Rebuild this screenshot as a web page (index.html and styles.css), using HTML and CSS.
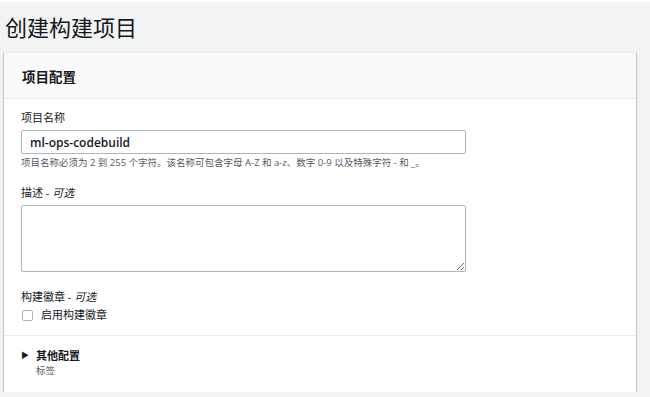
FILE: index.html
```html
<!DOCTYPE html>
<html lang="zh-CN">
<head>
    <meta charset="UTF-8">
    <meta name="viewport" content="width=device-width, initial-scale=1.0">
    <title>创建构建项目</title>
    <link rel="stylesheet" href="styles.css">
</head>
<body>
    <div class="page">
        <h1 class="page-title">创建构建项目</h1>

        <div class="panel">
            <div class="panel-header">
                <h2>项目配置</h2>
            </div>

            <div class="panel-body">
                <div class="field">
                    <label class="field-label">项目名称</label>
                    <input class="text-input" type="text" value="ml-ops-codebuild">
                    <p class="field-hint">项目名称必须为 2 到 255 个字符。该名称可包含字母 A-Z 和 a-z、数字 0-9 以及特殊字符 - 和 _。</p>
                </div>

                <div class="field">
                    <label class="field-label">描述 - <i>可选</i></label>
                    <textarea class="text-area"></textarea>
                </div>

                <div class="field field-last">
                    <label class="field-label">构建徽章 - <i>可选</i></label>
                    <label class="check">
                        <span class="check-box"></span>
                        <span>启用构建徽章</span>
                    </label>
                </div>
            </div>

            <div class="panel-footer">
                <div class="expander">
                    <span class="caret">&#9654;</span>
                    <span class="expander-title">其他配置</span>
                </div>
                <div class="expander-sub">标签</div>
            </div>
        </div>
    </div>
</body>
</html>
```

FILE: styles.css
```css
* {
    margin: 0;
    padding: 0;
    box-sizing: border-box;
}

body {
    font-family: "Open Sans", "Noto Sans CJK SC", sans-serif;
    background-color: #f2f3f3;
    color: #16191f;
    border-top: 2px solid #ffffff;
}

.page {
    padding: 0 14px 0 4px;
}

.page-title {
    font-family: "Noto Sans CJK SC", sans-serif;
    font-size: 22px;
    font-weight: 400;
    line-height: 30px;
    padding: 9px 0 11px 1px;
    color: #16191f;
}

.panel {
    background: #ffffff;
    box-shadow: 0 1px 1px 0 rgba(0, 28, 36, 0.3),
                1px 1px 1px 0 rgba(0, 28, 36, 0.15),
                -1px 1px 1px 0 rgba(0, 28, 36, 0.15);
    border-top: 1px solid #eaeded;
}

.panel-header {
    background: #fafafa;
    border-bottom: 1px solid #eaeded;
    height: 46px;
    display: flex;
    align-items: center;
    padding: 0 18px;
}

.panel-header h2 {
    font-family: "Noto Sans CJK SC", sans-serif;
    font-size: 13.5px;
    font-weight: 700;
    color: #16191f;
}

.panel-body {
    padding: 10px 17px 12px;
}

.field {
    margin-bottom: 14px;
}

.field-last {
    margin-top: 16px;
    margin-bottom: 0;
}

.field-label {
    display: block;
    font-size: 11px;
    line-height: 18px;
    color: #16191f;
    margin-bottom: 3px;
}

.field-label i {
    font-style: italic;
}

.text-input {
    display: block;
    width: 445px;
    height: 24px;
    border: 1px solid #aab7b8;
    border-radius: 2px;
    padding: 0 8px;
    font-family: "Open Sans", "Noto Sans CJK SC", sans-serif;
    font-size: 12px;
    font-weight: 600;
    color: #16191f;
    background: #ffffff;
}

.field-hint {
    font-size: 9.5px;
    line-height: 14px;
    color: #545b64;
    margin-top: 2px;
}

.text-area {
    display: block;
    width: 445px;
    height: 67px;
    border: 1px solid #aab7b8;
    border-radius: 2px;
    background: #ffffff;
    resize: vertical;
}

.check {
    display: flex;
    align-items: center;
    gap: 8px;
    font-size: 11px;
    line-height: 16px;
    margin-top: -2px;
}

.check-box {
    width: 11px;
    height: 11px;
    border: 1px solid #aab7b8;
    border-radius: 2px;
    background: #ffffff;
    margin-left: 1px;
}

.panel-footer {
    border-top: 1px solid #eaeded;
    padding: 10px 17px 14px;
}

.expander {
    display: flex;
    align-items: center;
    gap: 7px;
    line-height: 18px;
}

.caret {
    font-size: 8px;
    color: #16191f;
    padding-left: 0;
}

.expander-title {
    font-family: "Noto Sans CJK SC", sans-serif;
    font-size: 11px;
    font-weight: 700;
}

.expander-sub {
    font-size: 9.5px;
    line-height: 14px;
    color: #545b64;
    padding-left: 15px;
}
```
